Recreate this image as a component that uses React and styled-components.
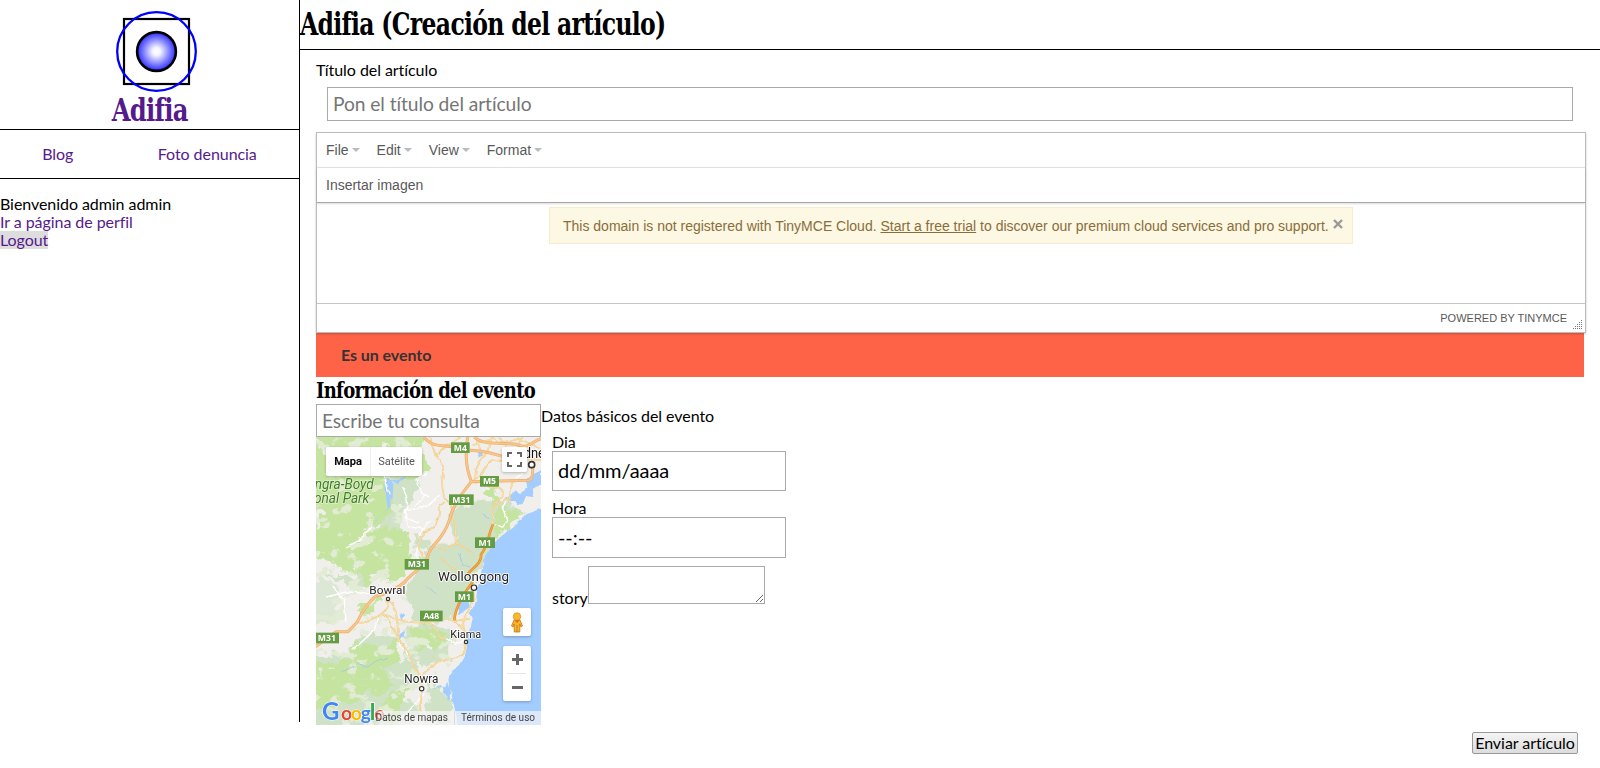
import React from "react";
import styled, { createGlobalStyle } from "styled-components";

const GlobalStyle = createGlobalStyle`
  * { box-sizing: border-box; }
  body { margin: 0; background: #fff; color: #000; font: 16px/18px Lato, sans-serif; letter-spacing: -0.06px; overflow: hidden; }
  a { color: #551a8b; text-decoration: none; }
`;

const Page = styled.div`
  display: flex;
  align-items: flex-start;
  width: 1600px;
  height: 768px;
`;

const Sidebar = styled.aside`
  width: 300px;
  height: 722px;
  flex: none;
  border-right: 1px solid #000;
`;

const Brand = styled.a`
  display: flex;
  flex-direction: column;
  align-items: center;
  height: 130px;
  padding-top: 10px;
  border-bottom: 1px solid #000;
  svg { display: block; margin-left: 14px; flex: none; }
`;

/* condensed slab lettering shared by the brand and the headings */
const Slab = styled.span`
  display: block;
  width: max-content;
  margin: 0;
  font-family: "DejaVu Serif Condensed", "DejaVu Serif", serif;
  font-stretch: condensed;
  font-weight: bold;
  font-size: ${(p) => p.$size}px;
  line-height: ${(p) => p.$line}px;
  letter-spacing: -0.8px;
  transform: scaleX(${(p) => p.$squeeze});
  transform-origin: ${(p) => p.$origin || "left"} center;
`;

const Nav = styled.nav`
  display: flex;
  justify-content: space-around;
  align-items: center;
  height: 49px;
  border-bottom: 1px solid #000;
`;

const Account = styled.div`
  display: flex;
  flex-direction: column;
  align-items: flex-start;
  padding-top: 16px;
`;

const Logout = styled.a`
  background: #ddd;
`;

const Main = styled.main`
  flex: 1;
  min-width: 0;
`;

const Header = styled.header`
  height: 50px;
  padding-top: 5px;
  border-bottom: 1px solid #000;
`;

const Form = styled.form`
  padding: 11px 16px 0;
`;

const Label = styled.label`
  display: block;
  height: 18px;
`;

const Input = styled.input`
  display: block;
  width: ${(p) => p.$width};
  height: ${(p) => p.$height}px;
  margin: ${(p) => p.$margin || 0};
  padding: 0 5px ${(p) => p.$lift || 0}px;
  border: 1px solid #a9a9a9;
  border-radius: 0;
  outline: none;
  background: #fff;
  color: #000;
  font: ${(p) => p.$size || 19.2}px/24px Lato, sans-serif;
  letter-spacing: -0.06px;
  &::placeholder { color: #757575; opacity: 1; }
`;

const Editor = styled.section`
  position: relative;
  width: 1270px;
  height: 201px;
  border: 1px solid #bcbcbc;
  box-shadow: 0 1px 2px rgba(0, 0, 0, 0.22);
  background: #fff;
  color: #595959;
  font: 14px/20px "Liberation Sans", sans-serif;
  letter-spacing: 0;
`;

const MenuBar = styled.div`
  display: flex;
  align-items: center;
  gap: 17px;
  height: 35px;
  padding-left: 9px;
  border-bottom: 1px solid #e2e2e2;
`;

const MenuItem = styled.span`
  display: flex;
  align-items: center;
  gap: 3px;
  &::after {
    content: "";
    border: 4px solid transparent;
    border-top-color: #b5bcc2;
    border-bottom: 0;
  }
`;

const ToolBar = styled.div`
  display: flex;
  align-items: center;
  height: 35px;
  padding-left: 9px;
  border-bottom: 1px solid #a8a8a8;
  box-shadow: 0 1px 2px rgba(0, 0, 0, 0.14);
`;

const EditArea = styled.div`
  display: flex;
  justify-content: center;
  align-items: flex-start;
  height: 101px;
  padding-top: 4px;
  border-bottom: 1px solid #c5c5c5;
`;

const Notice = styled.div`
  display: flex;
  align-items: center;
  gap: 4px;
  width: 804px;
  height: 37px;
  padding-left: 13px;
  white-space: nowrap;
  border: 1px solid #faebcc;
  background: #fcf8e3;
  color: #8a6d3b;
  a { color: #8a6d3b; text-decoration: underline; }
  svg { margin-top: -4px; }
`;

const StatusBar = styled.div`
  display: flex;
  justify-content: flex-end;
  align-items: center;
  gap: 6px;
  height: 28px;
  padding-right: 2px;
  font-size: 11px;
  svg { align-self: flex-end; margin-bottom: 2px; }
`;

const EventBar = styled.div`
  height: 44px;
  padding: 13px 25px;
  background: tomato;
  color: #333;
  font-weight: bold;
`;

const EventColumns = styled.div`
  display: flex;
  align-items: flex-start;
`;

const MapBox = styled.div`
  position: relative;
  width: 225px;
  height: 288px;
  overflow: hidden;
  background: #f1efeb;
  font-family: Roboto, sans-serif;
  letter-spacing: 0;
  > svg { display: block; }
`;

const MapControl = styled.div`
  position: absolute;
  left: ${(p) => p.$x}px;
  top: ${(p) => p.$y}px;
  width: ${(p) => p.$w}px;
  height: ${(p) => p.$h}px;
  display: flex;
  align-items: center;
  justify-content: center;
  flex-direction: ${(p) => p.$dir || "row"};
  background: #fff;
  border-radius: 2px;
  box-shadow: 0 1px 3px rgba(0, 0, 0, 0.25);
`;

const MapType = styled.span`
  width: ${(p) => p.$w}px;
  text-align: center;
  line-height: 29px;
  font-size: 11px;
  font-weight: ${(p) => (p.$active ? 500 : 400)};
  -webkit-text-stroke: ${(p) => (p.$active ? 0.2 : 0)}px;
  color: ${(p) => (p.$active ? "#000" : "#565656")};
  & + & { border-left: 1px solid #eee; }
`;

const MapFooter = styled.div`
  position: absolute;
  right: 0;
  bottom: 0;
  display: flex;
  justify-content: flex-end;
  width: 168px;
  height: 14px;
  font-size: 10px;
  line-height: 14px;
  color: #444;
  white-space: nowrap;
  background: linear-gradient(90deg, rgba(245, 245, 245, 0), rgba(245, 245, 245, 0.7) 8px);
  span { padding: 0 6px; }
  span + span { border-left: 1px solid #d8dde0; }
`;

const Fieldset = styled.div`
  padding-top: 3px;
`;

const Fields = styled.div`
  padding: 8px 0 0 11px;
`;

const Field = styled.div`
  margin-bottom: 8px;
`;

const Story = styled.div`
  display: flex;
  align-items: flex-end;
  label { margin-bottom: -3px; letter-spacing: 0; }
  textarea {
    width: 177px;
    height: 38px;
    border: 1px solid #a9a9a9;
    padding: 2px;
    outline: none;
  }
`;

const Actions = styled.div`
  display: flex;
  justify-content: flex-end;
  padding: 7px 6px 0 0;
`;

const Submit = styled.button`
  width: 106px;
  height: 22px;
  padding: 0;
  border: 1px solid #999;
  border-radius: 2px;
  background: linear-gradient(#f4f4f4, #dcdcdc);
  color: #000;
  font: 16px/18px Lato, sans-serif;
  letter-spacing: -0.03px;
`;

const Logo = () => (
  <svg width="83" height="83" viewBox="0 0 83 83">
    <defs>
      <radialGradient id="core">
        <stop offset="0" stopColor="#fff" />
        <stop offset="0.2" stopColor="#f4f4ff" />
        <stop offset="1" stopColor="#2b2bff" />
      </radialGradient>
    </defs>
    <rect x="9" y="9" width="65" height="65" fill="none" stroke="#000" strokeWidth="2.2" />
    <circle cx="41.5" cy="41.5" r="39.3" fill="none" stroke="#00f" strokeWidth="2.3" />
    <circle cx="41.5" cy="41.5" r="19.4" fill="url(#core)" stroke="#000" strokeWidth="2.6" />
  </svg>
);

const shields = [
  ["M4", 405, 16, 56],
  ["M5", 492, 117, 57],
  ["M31", 399, 172, 74],
  ["M1", 477, 301, 60],
  ["M31", 266, 366, 73],
  ["M1", 417, 463, 56],
  ["A48", 312, 521, 68],
  ["M31", -4, 587, 73],
];

const towns = [
  ["Wollongong", 366, 432, 39, 213, 474, 452, 8],
  ["Bowral", 160, 472, 35, 108, 216, 486, 5],
  ["Kiama", 403, 603, 35, 93, 450, 615, 5],
  ["Nowra", 265, 739, 36, 102, 317, 755, 6.5],
];

const mainRoads = [
  "M322 0C350 28 360 24 405 29M462 40Q520 42 575 65L640 60M455 0C450 40 445 80 466 134M466 134L640 130Q652 125 650 85M466 134C430 180 410 205 400 250C380 310 350 320 340 345C325 400 290 400 262 440",
  "M475 0C500 25 540 15 600 22C640 40 650 10 675 5",
  "M270 432Q225 470 180 477Q150 500 123 556L96 584H60L-5 632",
];

const coastRoads = [
  "M531 262C515 300 515 330 495 352C500 380 460 400 455 412",
  "M470 435C455 455 418 500 415 550",
];

const minorRoads = [
  "M340 0C350 45 360 45 362 60C390 95 380 110 378 135Q380 165 386 185Q405 200 408 215",
  "M386 195C360 210 375 245 358 265C345 290 325 270 322 295C295 320 310 345 320 360",
  "M408 225C425 270 415 310 420 315C450 330 445 340 475 352M425 318Q380 345 345 325",
  "M466 134C510 120 500 65 545 70C590 80 600 60 675 70M480 140C470 85 500 70 515 40L530 0M500 60L480 0M550 0L590 65L620 0",
  "M500 130C530 180 560 120 560 180C530 190 528 220 530 262M535 210L580 185L590 130",
  "M430 0C420 20 375 20 362 65M470 25L530 5L560 20L610 5L675 35",
  "M123 558L150 556L200 530L260 553L320 558L385 549L415 547L435 553L458 545M200 530C240 565 240 610 260 620C290 650 290 700 315 720",
  "M195 532Q215 520 216 490C250 510 240 560 250 615M340 558C370 575 365 610 390 605",
  "M317 713C350 690 350 680 375 670C420 665 435 665 446 645L450 615C450 590 435 565 445 540C465 520 460 505 475 485L470 450",
  "M317 713L315 825M415 550L445 580M372 360C390 385 410 395 430 405",
];

const whiteRoads = [
  "M265 215L275 270L325 275L340 250M275 220L330 210L370 175M265 240L310 260",
  "M300 205L330 170M260 150Q285 195 265 230M320 275L300 350L310 380",
  "M200 100L220 175M340 180Q310 170 300 130L330 110M165 270L130 310L90 330",
  "M530 262L560 270L575 250L560 215L570 195M590 130L620 110",
  "M90 555L85 490L50 450M185 540L175 580L110 640M250 620L275 650M325 770L290 810L250 850",
  "M30 480L90 465L160 470M390 605L420 620L450 610",
];

const MapDrawing = () => (
  <svg width="225" height="288" viewBox="0 0 675 864">
    <defs>
      <filter id="rough" x="-5%" y="-5%" width="110%" height="110%">
        <feTurbulence type="fractalNoise" baseFrequency="0.028" numOctaves="4" seed="4" />
        <feDisplacementMap in="SourceGraphic" scale="60" xChannelSelector="R" yChannelSelector="G" />
      </filter>
      <filter id="wiggle" x="-5%" y="-5%" width="110%" height="110%">
        <feTurbulence type="fractalNoise" baseFrequency="0.05" numOctaves="2" seed="9" />
        <feDisplacementMap in="SourceGraphic" scale="12" xChannelSelector="R" yChannelSelector="G" />
      </filter>
      <filter id="speckle" x="0" y="0" width="100%" height="100%">
        <feTurbulence type="fractalNoise" baseFrequency="0.022 0.03" numOctaves="5" seed="12" />
        <feColorMatrix values="0 0 0 0 0  0 0 0 0 0  0 0 0 0 0  14 0 0 0 -8.2" result="grain" />
        <feComposite in="SourceGraphic" in2="grain" operator="in" />
      </filter>
    </defs>
    <rect width="675" height="864" fill="#f1efeb" />
    <g filter="url(#rough)" fill="#cfe2c6">
      <path d="M190 110L310 115L295 200L250 215L260 300L210 330L180 290Z" />
      <path d="M410 215L535 180L625 225L535 300L495 400L470 430L400 432L420 310Z" />
      <path d="M350 322L420 318L470 350L485 400L430 520L380 560L300 545L270 470L310 375Z" />
      <path d="M-20 560L70 540L60 460L20 420L-20 440Z" opacity=".6" />
      <path d="M-20 650L80 650L150 590L250 600L310 710L230 780L320 800L280 864L-20 870Z" />
      <path d="M260 570L360 560L420 600L400 660L300 690Z" />
      <path d="M330 840L345 740L420 790L410 870Z" />
      <path d="M300 300L350 310L330 350L300 345Z" />
      <path d="M30 400L130 380L180 430L90 450Z" />
    </g>
    <g filter="url(#rough)" fill="#c5e4a0">
      <path d="M-20 -20H325L315 40L350 90L300 120L210 130L225 220L165 280L270 270L275 350L310 360L255 420L210 400L160 440L100 400L-20 360Z" />
      <path d="M545 210L625 225L560 290L535 300L540 250Z" />
      <path d="M-20 680L80 675L110 620L190 630L250 590L255 660L205 700L240 755L150 765L105 800L-20 820Z" />
      <path d="M275 570L350 575L400 610L360 650L340 620L300 640Z" />
      <path d="M120 500L190 480L160 530L130 540Z" />
      <path d="M195 790L290 750L270 790L240 840L200 850Z" />
      <path d="M520 160L550 150L540 190L520 200Z" />
      <path d="M170 330L265 320L250 420L190 440Z" />
    </g>
    <g filter="url(#rough)" fill="#f1efeb">
      <path d="M15 20L45 35L30 60L10 50ZM70 390L120 405L95 425L45 400ZM190 25L220 35L195 50Z" />
      <path d="M250 610L270 625L255 680L240 660ZM60 620L110 615L90 645ZM320 610L350 625L330 635Z" />
      <path d="M-10 210L20 240L0 270ZM110 300L170 290L145 320ZM-10 380L40 395L0 430ZM150 440L200 400L220 430Z" />
    </g>
    <path filter="url(#speckle)" fill="#e2ebd3" d="M0 0H300L270 130L250 430L300 560L420 600L400 700L330 864H0Z" />
    <g filter="url(#wiggle)" fill="#a3ccff">
      <path d="M690 210L628 232C590 280 540 300 522 338C500 365 495 405 493 432C475 465 488 485 475 505L460 530C475 550 465 570 450 600C460 650 440 665 425 690C390 710 395 735 405 760C410 800 425 835 425 875H690Z" />
      <path d="M567 188L600 160L612 175L635 150L625 132L655 110L675 100V145L650 155L655 180L630 178L620 200L605 205L600 190Z" />
      <path d="M212 125L230 130L225 210L190 235L165 280L185 240L215 215L208 160ZM230 130L270 120L245 142Z" />
      <path d="M427 500L455 485L462 510L430 532ZM250 525L270 535L255 550ZM250 588L268 582L262 600L250 602ZM390 735L405 755L400 790L380 765Z" />
      <path d="M482 45L502 47L490 63Z" />
    </g>
    <path filter="url(#wiggle)" fill="none" stroke="#9cc6f2" strokeWidth="2.5" d="M75 705L120 685L130 680L155 690L185 668L215 664M428 345L440 385L465 390M350 755L375 745L395 770M500 230L520 245M330 445L360 470" />
    <g fill="none" strokeLinejoin="round" filter="url(#wiggle)">
      {whiteRoads.map((d) => <path key={d} d={d} stroke="#fff" strokeWidth="4" />)}
      {minorRoads.map((d) => <path key={d} d={d} stroke="#edc988" strokeWidth="5" />)}
      {minorRoads.map((d) => <path key={d + "i"} d={d} stroke="#fce3a8" strokeWidth="2.5" />)}
    </g>
    <g fill="none" strokeLinejoin="round">
      {mainRoads.map((d) => <path key={d} d={d} stroke="#eaae6c" strokeWidth="9" />)}
      {mainRoads.map((d) => <path key={d + "i"} d={d} stroke="#fbc68b" strokeWidth="5" />)}
      {coastRoads.map((d) => <path key={d} d={d} stroke="#e8932c" strokeWidth="8" />)}
      {coastRoads.map((d) => <path key={d + "i"} d={d} stroke="#f7ae4e" strokeWidth="3" />)}
    </g>
    {shields.map(([name, x, y, w]) => (
      <g key={name + x}>
        <rect x={x} y={y} width={w} height="32" fill="#649c43" />
        <text x={x + w / 2} y={y + 25} textAnchor="middle" fill="#fff" fontFamily="Open Sans" fontWeight="700" fontSize="26">{name}</text>
      </g>
    ))}
    <g fill="#222" stroke="#fff" strokeWidth="5" paintOrder="stroke" strokeLinejoin="round">
      {towns.map(([name, x, y, size, w]) => (
        <text key={name} x={x} y={y} fontSize={size} textLength={w} lengthAdjust="spacingAndGlyphs">{name}</text>
      ))}
      <text x="623" y="62" fontSize="42" fill="#111" textLength="64" lengthAdjust="spacingAndGlyphs">dne</text>
    </g>
    <g fill="#fff" stroke="#333" strokeWidth="3.5">
      {towns.map(([name, , , , , cx, cy, r]) => <circle key={name} cx={cx} cy={cy} r={r} />)}
      <circle cx="647" cy="83" r="9" strokeWidth="5" />
    </g>
    <g fontStyle="italic" fontSize="41" fill="#3f7d25" stroke="#e4f3d4" strokeWidth="4" paintOrder="stroke">
      <text x="-4" y="155" textLength="177" lengthAdjust="spacingAndGlyphs">ngra-Boyd</text>
      <text x="-6" y="197" textLength="166" lengthAdjust="spacingAndGlyphs">onal Park</text>
    </g>
    <g fontFamily="Lato" fontWeight="700" fontSize="58" stroke="#fff" strokeWidth="3" paintOrder="stroke">
      <text x="18" y="849" fontSize="72" fill="#4285f4">G</text>
      <text x="75" y="849" fill="#ea4335">o</text>
      <text x="104" y="849" fill="#fbbc05">o</text>
      <text x="134" y="849" fill="#4285f4">g</text>
      <text x="161" y="849" fontSize="68" fill="#34a853">l</text>
      <text x="175" y="849" fill="#ea4335">e</text>
    </g>
  </svg>
);

const EventMap = () => (
  <MapBox>
    <MapDrawing />
    <MapControl $x={10} $y={10} $w={96} $h={29}>
      <MapType $w={44} $active>Mapa</MapType>
      <MapType $w={52}>Satélite</MapType>
    </MapControl>
    <MapControl $x={186} $y={10} $w={25} $h={25}>
      <svg width="15" height="15" fill="none" stroke="#666" strokeWidth="2">
        <path d="M1 5V1H5M10 1H14V5M14 10V14H10M5 14H1V10" />
      </svg>
    </MapControl>
    <MapControl $x={187} $y={171} $w={28} $h={28}>
      <svg width="14" height="21" viewBox="0 0 14 21">
        <path d="M4 8H10L12.5 14L11 15L9.8 12V20H4.2V12L3 15L1.5 14Z" fill="#f9b424" stroke="#c07a1c" strokeWidth=".8" />
        <path d="M7 13V20" stroke="#c07a1c" strokeWidth=".8" />
        <circle cx="7" cy="4.5" r="3.8" fill="#fbb829" stroke="#c98a28" strokeWidth=".6" />
        <path d="M4.5 8.3H9.5L7 11Z" fill="#e8672c" />
      </svg>
    </MapControl>
    <MapControl $x={187} $y={209} $w={28} $h={55} $dir="column">
      <svg width="28" height="55" fill="none" stroke="#666" strokeWidth="3">
        <path d="M9 13.5H20M14.5 8V19M9 41.5H20" />
        <path d="M4 27.5H23" stroke="#e6e6e6" strokeWidth="1" />
      </svg>
    </MapControl>
    <MapFooter><span>Datos de mapas</span><span>Términos de uso</span></MapFooter>
  </MapBox>
);

export default function App() {
  return (
    <Page>
      <GlobalStyle />
      <Sidebar>
        <Brand href="#">
          <Logo />
          <Slab $size={31} $line={34} $squeeze={0.87} $origin="center">Adifia</Slab>
        </Brand>
        <Nav>
          <a href="#">Blog</a>
          <a href="#">Foto denuncia</a>
        </Nav>
        <Account>
          <span>Bienvenido admin admin</span>
          <a href="#">Ir a página de perfil</a>
          <Logout href="#">Logout</Logout>
        </Account>
      </Sidebar>
      <Main>
        <Header>
          <Slab as="h1" $size={31} $line={38} $squeeze={0.843}>Adifia (Creación del artículo)</Slab>
        </Header>
        <Form>
          <Label>Título del artículo</Label>
          <Input $width="1246px" $height={34} $lift={1} $margin="8px 0 11px 11px" placeholder="Pon el título del artículo" />
          <Editor>
            <MenuBar>
              {["File", "Edit", "View", "Format"].map((m) => <MenuItem key={m}>{m}</MenuItem>)}
            </MenuBar>
            <ToolBar>Insertar imagen</ToolBar>
            <EditArea>
              <Notice>
                <span>This domain is not registered with TinyMCE Cloud. <a href="#">Start a free trial</a> to discover our premium cloud services and pro support.</span>
                <svg width="10" height="10" stroke="#999" strokeWidth="2.4"><path d="M1 1L9 9M9 1L1 9" /></svg>
              </Notice>
            </EditArea>
            <StatusBar>
              POWERED BY TINYMCE
              <svg width="10" height="10" fill="#777">
                {[0, 1, 2, 3, 4].flatMap((r) =>
                  Array.from({ length: r + 1 }, (_, c) => (
                    <rect key={`${r}-${c}`} x={8 - c * 2} y={r * 2} width="1" height="1" />
                  ))
                )}
              </svg>
            </StatusBar>
          </Editor>
          <EventBar>Es un evento</EventBar>
          <Slab as="h2" $size={22.5} $line={27} $squeeze={0.89}>Información del evento</Slab>
          <EventColumns>
            <div>
              <Input $width="225px" $height={33} $lift={1} placeholder="Escribe tu consulta" />
              <EventMap />
            </div>
            <Fieldset>
              Datos básicos del evento
              <Fields>
                <Field>
                  <Label>Dia</Label>
                  <Input $width="234px" $height={40} $size={20} $lift={2} defaultValue="dd/mm/aaaa" />
                </Field>
                <Field>
                  <Label>Hora</Label>
                  <Input $width="234px" $height={41} $size={20} $lift={2} defaultValue="--:--" />
                </Field>
                <Story><Label>story</Label><textarea /></Story>
              </Fields>
            </Fieldset>
          </EventColumns>
          <Actions><Submit type="button">Enviar artículo</Submit></Actions>
        </Form>
      </Main>
    </Page>
  );
}
